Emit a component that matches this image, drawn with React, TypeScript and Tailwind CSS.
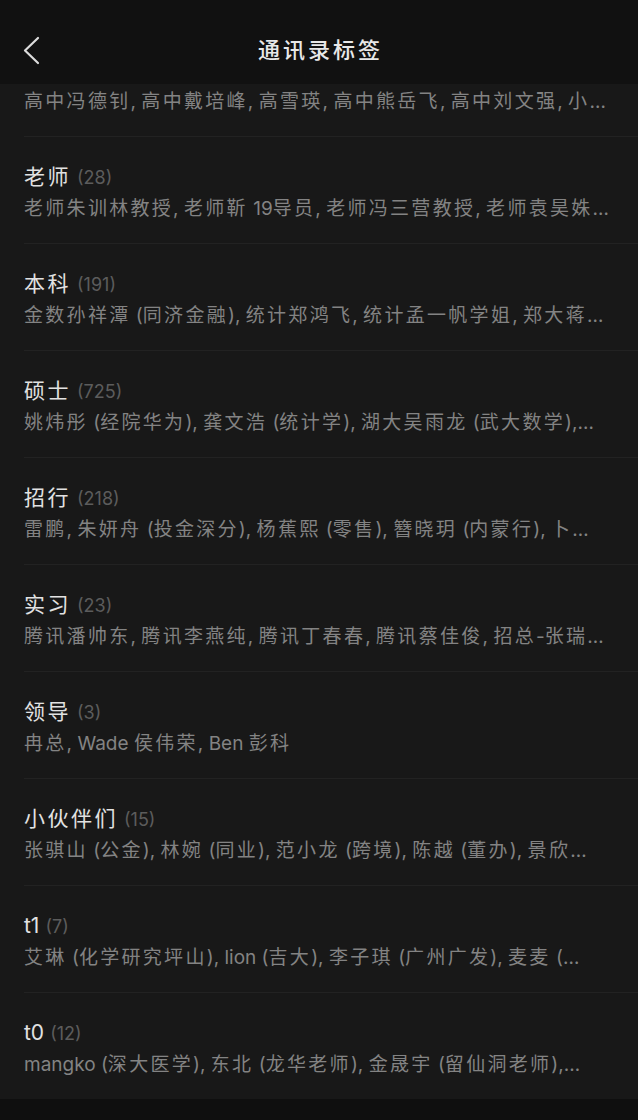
type Tag = { name: string; count: number; members: string };

const TAGS: Tag[] = [
  { name: "老师", count: 28, members: "老师朱训林教授, 老师靳 19导员, 老师冯三营教授, 老师袁昊姝…" },
  { name: "本科", count: 191, members: "金数孙祥潭 (同济金融), 统计郑鸿飞, 统计孟一帆学姐, 郑大蒋…" },
  { name: "硕士", count: 725, members: "姚炜彤 (经院华为), 龚文浩 (统计学), 湖大吴雨龙 (武大数学),…" },
  { name: "招行", count: 218, members: "雷鹏, 朱妍舟 (投金深分), 杨蕉熙 (零售), 簪晓玥 (内蒙行), 卜…" },
  { name: "实习", count: 23, members: "腾讯潘帅东, 腾讯李燕纯, 腾讯丁春春, 腾讯蔡佳俊, 招总-张瑞…" },
  { name: "领导", count: 3, members: "冉总, Wade 侯伟荣, Ben 彭科" },
  { name: "小伙伴们", count: 15, members: "张骐山 (公金), 林婉 (同业), 范小龙 (跨境), 陈越 (董办), 景欣…" },
  { name: "t1", count: 7, members: "艾琳 (化学研究坪山), lion (吉大), 李子琪 (广州广发), 麦麦 (…" },
  { name: "t0", count: 12, members: "mangko (深大医学), 东北 (龙华老师), 金晟宇 (留仙洞老师),…" },
];

const font = { fontFamily: 'Inter, "Noto Sans CJK SC", sans-serif' };

// CJK glyphs in the shot sit on a wider advance than latin, so space them out
function Spaced({ text, cjk }: { text: string; cjk: string }) {
  const parts = text.split(/([\u3000-\u9fff\uff00-\uffef]+)/);
  return (
    <>
      {parts.map((p, i) => (i % 2 === 1 ? <span key={i} className={cjk}>{p}</span> : <span key={i}>{p}</span>))}
    </>
  );
}

function Members({ text }: { text: string }) {
  return (
    <p className="h-[26px] leading-[26px] text-[19px] text-[#838383] whitespace-nowrap">
      <Spaced text={text} cjk="tracking-[2.3px]" />
    </p>
  );
}

function TagRow({ tag }: { tag: Tag }) {
  return (
    <div className="ml-6 border-t border-[#222222] pt-[25px] pb-[21px] pr-[22px]">
      <div className="flex items-baseline h-[30px] leading-[30px]">
        <span className="text-[21px] text-[#e2e2e2]">
          <Spaced text={tag.name} cjk="tracking-[2.5px]" />
        </span>
        <span className="ml-[6px] text-[18px] text-[#5c5c5c]">({tag.count})</span>
      </div>
      <div className="mt-[4px]">
        <Members text={tag.members} />
      </div>
    </div>
  );
}

export default function App() {
  return (
    <div className="w-[638px] h-[1120px] bg-[#181818] flex flex-col overflow-hidden" style={font}>
      {/* nav bar */}
      <div className="relative h-[84px] shrink-0 bg-[#111111] flex items-center justify-center pt-[16px]">
        <svg className="absolute left-[22px] top-[36px]" width="20" height="30" viewBox="0 0 20 30" fill="none">
          <polyline points="16,2 3,14.5 16,27" stroke="#dcdcdc" strokeWidth="2.2" strokeLinecap="round" strokeLinejoin="round" />
        </svg>
        <h1 className="text-[22px] font-medium text-[#e8e8e8] tracking-[3px] pl-[3px]">通讯录标签</h1>
      </div>

      {/* list */}
      <div className="flex-1">
        <div className="pl-6 pr-[22px] pt-[5px] pb-[21px]">
          <Members text="高中冯德钊, 高中戴培峰, 高雪瑛, 高中熊岳飞, 高中刘文强, 小…" />
        </div>
        {TAGS.map((t) => (
          <TagRow key={t.name} tag={t} />
        ))}
      </div>

      <div className="h-[21px] shrink-0 bg-[#0f0f0f]" />
    </div>
  );
}
